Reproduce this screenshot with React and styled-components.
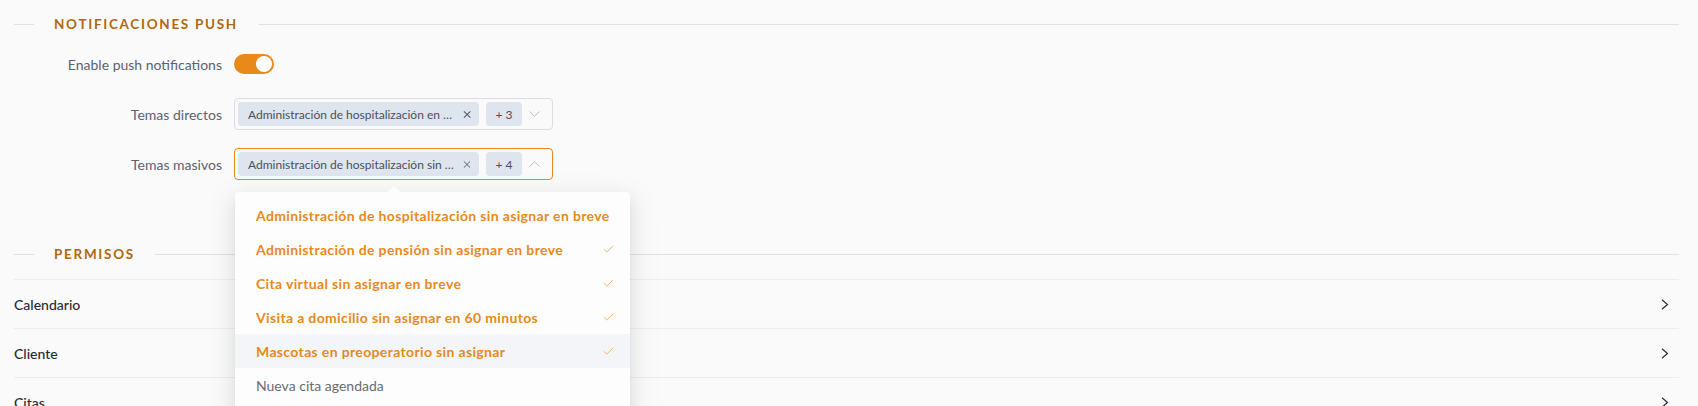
import React from "react";
import styled, { createGlobalStyle } from "styled-components";

const GlobalStyle = createGlobalStyle`
  html, body {
    margin: 0;
    padding: 0;
    background: #fafafa;
    overflow: hidden;
  }
  * {
    box-sizing: border-box;
  }
  body {
    font-family: "Lato", "Noto Sans", sans-serif;
  }
`;

const orange = "#e8891a";

const Page = styled.div`
  padding: 14px 19px 0 14px;
  height: 406px;
  overflow: hidden;
`;

const SectionHeader = styled.div`
  display: flex;
  align-items: center;
  gap: 20px;
  height: 20px;
  margin-bottom: ${(p) => p.$gap || 14}px;

  &::before,
  &::after {
    content: "";
    height: 1px;
    background: #e1e1e8;
  }
  &::before {
    width: 20px;
  }
  &::after {
    flex: 1;
  }
`;

const SectionTitle = styled.h3`
  margin: 0;
  font-size: 13.5px;
  font-weight: 700;
  letter-spacing: 1.7px;
  color: #b0670f;
  text-transform: uppercase;
`;

const Form = styled.div`
  display: flex;
  flex-direction: column;
  gap: 18px;
  margin-bottom: 64px;
`;

const FormRow = styled.div`
  display: flex;
  align-items: center;
  height: 32px;
`;

const Label = styled.label`
  width: 220px;
  padding-right: 12px;
  text-align: right;
  font-size: 14px;
  color: #5a6170;
`;

const Switch = styled.button`
  position: relative;
  width: 40px;
  height: 20px;
  border: none;
  border-radius: 10px;
  padding: 0;
  background: ${(p) => (p.$on ? orange : "#c8c8c8")};
  cursor: pointer;

  &::after {
    content: "";
    position: absolute;
    top: 2px;
    left: ${(p) => (p.$on ? "22px" : "2px")};
    width: 16px;
    height: 16px;
    border-radius: 50%;
    background: #fff;
  }
`;

const SelectWrap = styled.div`
  position: relative;
`;

const SelectBox = styled.div`
  display: flex;
  align-items: center;
  gap: 7px;
  width: 319px;
  height: 32px;
  padding: 0 12px 0 3px;
  border: 1px solid ${(p) => (p.$open ? orange : "#dcdde3")};
  border-radius: 4px;
  background: #fafafa;
`;

const Tag = styled.span`
  display: flex;
  align-items: center;
  justify-content: ${(p) => (p.$count ? "center" : "space-between")};
  gap: 8px;
  width: ${(p) => (p.$count ? "36px" : "241px")};
  height: 24px;
  padding: ${(p) => (p.$count ? "0" : "0 8px 0 10px")};
  border-radius: 4px;
  background: #dfe5ee;
  font-size: 12px;
  color: #4a4f5c;
  white-space: nowrap;
`;

const TagText = styled.span`
  overflow: hidden;
  text-overflow: ellipsis;
`;

const Arrow = styled.span`
  display: flex;
  margin-left: auto;
`;

const Dropdown = styled.div`
  position: absolute;
  top: 44px;
  left: 1px;
  width: 395px;
  padding: 6px 0;
  background: #fdfdfd;
  border-radius: 4px;
  box-shadow: 0 6px 16px 0 rgba(0, 0, 0, 0.08),
    0 3px 6px -4px rgba(0, 0, 0, 0.12), 0 9px 28px 8px rgba(0, 0, 0, 0.05);
  z-index: 10;

  &::before {
    content: "";
    position: absolute;
    top: -6px;
    left: 152px;
    border-left: 7px solid transparent;
    border-right: 7px solid transparent;
    border-bottom: 6px solid #fdfdfd;
  }
`;

const Option = styled.div`
  display: flex;
  align-items: center;
  height: 34px;
  padding: 0 16px 0 21px;
  font-size: 14px;
  font-weight: ${(p) => (p.$selected ? 700 : 400)};
  letter-spacing: ${(p) => (p.$selected ? "0.35px" : "0")};
  color: ${(p) => (p.$selected ? orange : "#6b6b6f")};
  background: ${(p) => (p.$active ? "#f3f5f9" : "transparent")};
  white-space: nowrap;
`;

const OptionText = styled.span`
  flex: 1;
  overflow: hidden;
`;

const List = styled.div`
  display: flex;
  flex-direction: column;
`;

const ListRow = styled.div`
  display: flex;
  align-items: center;
  justify-content: space-between;
  height: 49px;
  border-top: 1px solid #ececf1;
  padding-right: 10px;
  font-size: 14px;
  font-weight: 500;
  color: #262a33;
`;

const Close = () => (
  <svg width="9" height="9" viewBox="0 0 9 9">
    <path d="M1 1L8 8M8 1L1 8" stroke="#555a66" strokeWidth="1.1" fill="none" />
  </svg>
);

const ChevronV = ({ up }) => (
  <svg width="11" height="6" viewBox="0 0 11 6">
    <path
      d={up ? "M0.5 5.5L5.5 0.8L10.5 5.5" : "M0.5 0.5L5.5 5.2L10.5 0.5"}
      stroke="#bcbcc2"
      strokeWidth="1"
      fill="none"
    />
  </svg>
);

const Check = () => (
  <svg width="11" height="8" viewBox="0 0 11 8">
    <path d="M0.8 4.2L3.8 7L10.2 0.8" stroke="#f2b46e" strokeWidth="1" fill="none" />
  </svg>
);

const ChevronRight = () => (
  <svg width="8" height="11" viewBox="0 0 8 11">
    <path d="M1 0.8L6.5 5.5L1 10.2" stroke="#2a2d35" strokeWidth="1.2" fill="none" />
  </svg>
);

const options = [
  { label: "Administración de hospitalización sin asignar en breve", selected: true, check: false },
  { label: "Administración de pensión sin asignar en breve", selected: true, check: true },
  { label: "Cita virtual sin asignar en breve", selected: true, check: true },
  { label: "Visita a domicilio sin asignar en 60 minutos", selected: true, check: true },
  { label: "Mascotas en preoperatorio sin asignar", selected: true, check: true, active: true },
  { label: "Nueva cita agendada" },
  { label: "Cita cancelada" },
];

const permisos = ["Calendario", "Cliente", "Citas", "Inventario"];

const MultiSelect = ({ first, count, open }) => (
  <SelectWrap>
    <SelectBox $open={open}>
      <Tag>
        <TagText>{first}</TagText>
        <Close />
      </Tag>
      <Tag $count>+ {count}</Tag>
      <Arrow>
        <ChevronV up={open} />
      </Arrow>
    </SelectBox>
    {open && (
      <Dropdown>
        {options.map((o) => (
          <Option key={o.label} $selected={o.selected} $active={o.active}>
            <OptionText>{o.label}</OptionText>
            {o.check && <Check />}
          </Option>
        ))}
      </Dropdown>
    )}
  </SelectWrap>
);

export default function App() {
  return (
    <>
      <GlobalStyle />
      <Page>
        <SectionHeader>
          <SectionTitle>Notificaciones push</SectionTitle>
        </SectionHeader>

        <Form>
          <FormRow>
            <Label>Enable push notifications</Label>
            <Switch $on />
          </FormRow>
          <FormRow>
            <Label>Temas directos</Label>
            <MultiSelect first="Administración de hospitalización en breve" count={3} />
          </FormRow>
          <FormRow>
            <Label>Temas masivos</Label>
            <MultiSelect first="Administración de hospitalización sin asignar" count={4} open />
          </FormRow>
        </Form>

        <SectionHeader $gap={15}>
          <SectionTitle>Permisos</SectionTitle>
        </SectionHeader>

        <List>
          {permisos.map((p) => (
            <ListRow key={p}>
              {p}
              <ChevronRight />
            </ListRow>
          ))}
        </List>
      </Page>
    </>
  );
}
